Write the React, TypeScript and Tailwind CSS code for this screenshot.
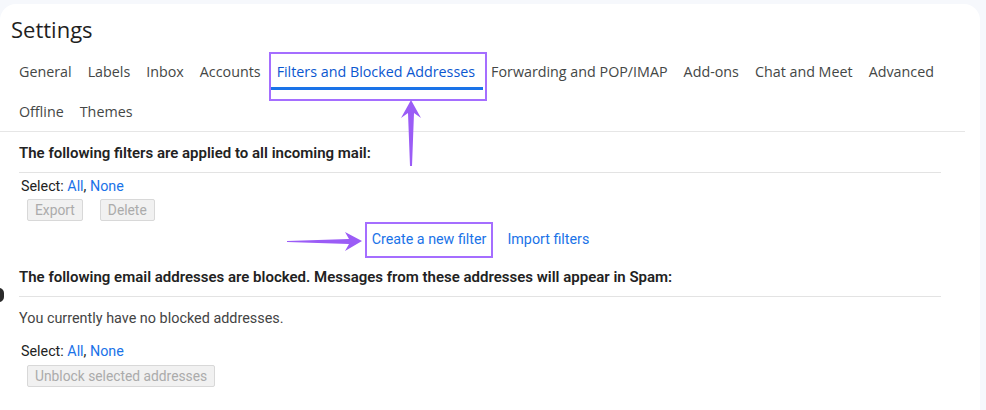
const tabs1 = ["General", "Labels", "Inbox", "Accounts"];
const tabs2 = ["Forwarding and POP/IMAP", "Add-ons", "Chat and Meet", "Advanced"];

function Tab({ label }: { label: string }) {
  return <div className="flex h-10 items-center px-2 text-[14.3px] text-[#444746]">{label}</div>;
}

function SelectRow() {
  return (
    <div className="pl-[2px] text-[14.3px] leading-5 text-[#222]">
      Select: <span className="text-[#1a73e8]">All</span>, <span className="text-[#1a73e8]">None</span>
    </div>
  );
}

function GrayButton({ label }: { label: string }) {
  return (
    <span className="inline-flex h-[22px] items-center rounded-[2px] border border-[#d8d8d8] bg-[#f1f1f1] px-[7px] text-[13.8px] text-[#ababab]">
      {label}
    </span>
  );
}

export default function App() {
  return (
    <div className="relative h-[410px] w-[986px] overflow-hidden bg-[#f6f8fc] pt-1 pr-[6px] font-['Roboto',sans-serif]">
      <div className="relative h-full rounded-t-2xl bg-white">
        <h1 className="pt-[11px] pl-[11px] font-['Open_Sans',sans-serif] text-[22px] leading-7 text-[#1f1f1f]">Settings</h1>

        <div className="mt-[9px] flex h-[80px] w-[965px] flex-wrap border-b border-[#e6e6e6] pl-[11px] font-['Open_Sans',sans-serif]">
          {tabs1.map((t) => (
            <Tab key={t} label={t} />
          ))}
          <div className="relative flex h-10 items-center px-2 text-[14.3px] text-[#0b57d0]">
            Filters and Blocked Addresses
            <div className="absolute right-0 bottom-[2px] left-[2px] h-[3px] bg-[#1a73e8]" />
            <div className="absolute top-0 -right-[4px] -bottom-[9px] left-0 border-2 border-[#a56eff]" />
          </div>
          {tabs2.map((t) => (
            <Tab key={t} label={t} />
          ))}
          <Tab label="Offline" />
          <Tab label="Themes" />
        </div>

        <div className="ml-[19px] w-[922px]">
          <div className="flex h-[41px] items-center border-b border-[#e3e3e3] pt-[2px] text-[15px] font-semibold text-[#222]">
            The following filters are applied to all incoming mail:
          </div>
          <div className="pt-[3px]">
            <SelectRow />
            <div className="mt-[3px] flex gap-[17px] pl-[8px]">
              <GrayButton label="Export" />
              <GrayButton label="Delete" />
            </div>
          </div>
          <div className="mt-[3px] flex h-[32px] items-center justify-center gap-[14px] pr-[6px] text-[14.3px] text-[#1a73e8]">
            <span className="relative px-[7px]">
              Create a new filter
              <span className="absolute -top-[7px] right-0 -bottom-[7px] left-0 border-2 border-[#a56eff]" />
            </span>
            <span>Import filters</span>
          </div>

          <div className="flex h-[41px] items-center border-b border-[#e3e3e3] pt-[2px] text-[15px] font-semibold text-[#222]">
            The following email addresses are blocked. Messages from these addresses will appear in Spam:
          </div>
          <div className="pt-[12px] text-[14.4px] leading-5 text-[#444]">You currently have no blocked addresses.</div>
          <div className="pt-[12px]">
            <SelectRow />
            <div className="mt-[3px] pl-[8px]">
              <GrayButton label="Unblock selected addresses" />
            </div>
          </div>
        </div>

        <svg className="pointer-events-none absolute top-[-4px] left-0" width="986" height="410">
          <polygon points="411,100 421,118 414,113 412,166 410,166 408,113 401,118" fill="#9b5cf6" />
          <polygon points="362,241 345,232 349,239 287,241 287,242 349,244 345,251" fill="#9b5cf6" />
        </svg>
      </div>
      <div className="absolute top-[288px] left-[-6px] h-[14px] w-[10px] rounded-full bg-[#2b2b2b]" />
    </div>
  );
}
